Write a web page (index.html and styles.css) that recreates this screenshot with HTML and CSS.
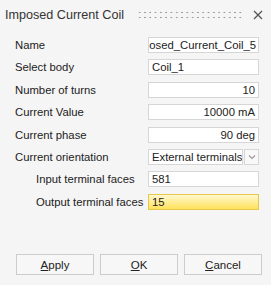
FILE: index.html
```html
<!DOCTYPE html>
<html lang="en">
<head>
  <meta charset="UTF-8">
  <title>Imposed Current Coil</title>
  <link rel="stylesheet" href="styles.css">
</head>
<body>
  <div class="dialog">
    <div class="titlebar">
      <span class="title">Imposed Current Coil</span>
      <span class="grip"></span>
      <svg class="close" width="10" height="10" viewBox="0 0 10 10">
        <path d="M1 1 L9 9 M9 1 L1 9" stroke="#555" stroke-width="1.3" fill="none"/>
      </svg>
    </div>

    <div class="rows">
      <label class="lbl">Name</label>
      <div class="field clip"><span>Imposed_Current_Coil_5</span></div>

      <label class="lbl">Select body</label>
      <div class="field">Coil_1</div>

      <label class="lbl">Number of turns</label>
      <div class="field num">10</div>

      <label class="lbl">Current Value</label>
      <div class="field num">10000 mA</div>

      <label class="lbl">Current phase</label>
      <div class="field num">90 deg</div>

      <label class="lbl">Current orientation</label>
      <div class="combo">
        <div class="field">External terminals</div>
        <div class="arrow">
          <svg width="8" height="6" viewBox="0 0 8 6">
            <path d="M1 1.5 L4 4.5 L7 1.5" stroke="#999" stroke-width="1.1" fill="none"/>
          </svg>
        </div>
      </div>

      <label class="lbl sub">Input terminal faces</label>
      <div class="field">581</div>

      <label class="lbl sub">Output terminal faces</label>
      <div class="field active">15</div>
    </div>

    <div class="buttons">
      <button><u>A</u>pply</button>
      <button><u>O</u>K</button>
      <button><u>C</u>ancel</button>
    </div>
  </div>
</body>
</html>
```

FILE: styles.css
```css
body {
  margin: 0;
  background: #f5f5f5;
  font-family: "Liberation Sans", Arial, sans-serif;
  font-size: 11.3px;
  color: #222;
}
.dialog {
  width: 271px;
  height: 285px;
  display: flex;
  flex-direction: column;
}
.titlebar {
  height: 30px;
  display: flex;
  align-items: center;
  padding: 0 4px 0 5px;
}
.title {
  font-size: 12.6px;
  color: #333;
}
.grip {
  flex: 1;
  height: 10px;
  margin: 0 10px 0 13px;
  background-image: radial-gradient(circle, #9a9a9a 0.8px, transparent 1.1px);
  background-size: 5.3px 5px;
}
.close {
  margin-right: 4px;
}
.rows {
  display: grid;
  grid-template-columns: 133px 111px;
  grid-auto-rows: 16px;
  row-gap: 6.4px;
  padding: 7px 0 0 15px;
  align-items: center;
}
.lbl {
  white-space: nowrap;
}
.lbl.sub {
  padding-left: 21px;
}
.field {
  height: 16px;
  line-height: 14px;
  background: #fff;
  border: 1px solid #d6d6d6;
  padding: 0 3px;
  box-sizing: border-box;
  white-space: nowrap;
  overflow: hidden;
}
.field.num {
  text-align: right;
}
.field.clip {
  display: flex;
  justify-content: flex-end;
  padding: 0 2px 0 0;
}
.field.active {
  background: linear-gradient(#fff8d0, #ffe25a);
  border-color: #e8c84a;
}
.combo {
  display: flex;
  gap: 1px;
}
.combo .field {
  flex: 1;
}
.arrow {
  width: 15px;
  height: 16px;
  box-sizing: border-box;
  border: 1px solid #d6d6d6;
  background: #f8f8f8;
  display: flex;
  align-items: center;
  justify-content: center;
}
.buttons {
  margin-top: auto;
  margin-bottom: 10px;
  display: flex;
  gap: 6px;
  padding-left: 16px;
}
button {
  width: 78px;
  height: 21px;
  font-family: inherit;
  font-size: 11.5px;
  color: #222;
  background: #f7f7f7;
  border: 1px solid #cccccc;
  padding: 0;
}
```
